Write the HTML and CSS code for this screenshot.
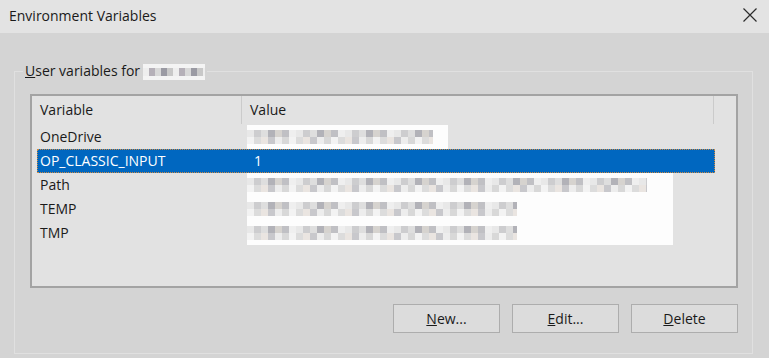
FILE: index.html
```html
<!DOCTYPE html>
<html>
<head>
  <meta charset="utf-8">
  <title>Environment Variables</title>
  <link rel="stylesheet" href="styles.css">
</head>
<body>
  <div class="titlebar">
    <span class="title">Environment Variables</span>
    <svg class="close" width="14" height="14" viewBox="0 0 14 14">
      <path d="M0.5 0.5 L13.5 13.5 M13.5 0.5 L0.5 13.5" stroke="#2b2b2b" stroke-width="1.2" fill="none"/>
    </svg>
  </div>

  <div class="content">
    <fieldset class="group">
      <legend><u>U</u>ser variables for<span class="blur blur-name"></span></legend>

      <div class="listview">
        <div class="list-header">
          <div class="col col-var">Variable</div>
          <div class="col col-val">Value</div>
          <div class="col col-rest"></div>
        </div>
        <div class="row">
          <div class="cell-var">OneDrive</div>
          <div class="cell-val white w-short"><span class="blur" style="width: 186px;"></span></div>
        </div>
        <div class="row selected">
          <div class="cell-var">OP_CLASSIC_INPUT</div>
          <div class="cell-val">1</div>
        </div>
        <div class="row">
          <div class="cell-var">Path</div>
          <div class="cell-val white w-long"><span class="blur" style="width: 400px;"></span></div>
        </div>
        <div class="row">
          <div class="cell-var">TEMP</div>
          <div class="cell-val white w-long"><span class="blur" style="width: 270px;"></span></div>
        </div>
        <div class="row">
          <div class="cell-var">TMP</div>
          <div class="cell-val white w-long"><span class="blur" style="width: 270px;"></span></div>
        </div>
      </div>

      <div class="buttons">
        <button><u>N</u>ew...</button>
        <button><u>E</u>dit...</button>
        <button><u>D</u>elete</button>
      </div>
    </fieldset>
  </div>
</body>
</html>
```

FILE: styles.css
```css
html, body {
  margin: 0;
  padding: 0;
}

body {
  width: 769px;
  height: 358px;
  overflow: hidden;
  background-color: #d4d4d4;
  font-family: "Open Sans", "Noto Sans", sans-serif;
  font-size: 14px;
  color: #1a1a1a;
}

.titlebar {
  height: 33px;
  background-color: #e3e3e3;
  display: flex;
  justify-content: space-between;
  align-items: center;
  padding: 0 12px 0 9px;
}

.title {
  font-size: 14px;
  margin-top: -2px;
}

.close {
  margin-top: -4px;
}

.content {
  padding: 28px 0 0 14px;
}

.group {
  width: 739px;
  height: 293px;
  box-sizing: border-box;
  margin: 0;
  padding: 0 14px 0 15px;
  border: 1px solid #e0e0e0;
}

.group legend {
  padding: 0 2px;
  margin-left: -7px;
  line-height: 20px;
}

.blur {
  display: inline-block;
  height: 16px;
  vertical-align: middle;
  background:
    repeating-linear-gradient(90deg, #e8e8e8 0 7px, #cdcdcf 7px 14px, #dedede 14px 21px, #b2b2b8 21px 28px, #d6d3cf 28px 35px, #c0c0c4 35px 42px, #efefef 42px 49px) 0 1px / 100% 7px no-repeat,
    repeating-linear-gradient(90deg, #f3f3f3 0 7px, #dcdcdc 7px 14px, #eae5e1 14px 21px, #c8c8cc 21px 28px, #ededed 28px 35px, #d8d8d8 35px 42px) 0 8px / 100% 7px no-repeat;
}

.blur-name {
  width: 62px;
  height: 16px;
  margin-left: 3px;
  background:
    repeating-linear-gradient(90deg, #eeeeee 0 6px, #b5b0b8 6px 12px, #d8d8d8 12px 18px, #9a9aa3 18px 24px, #c8c8c8 24px 30px) 0 4px / 100% 8px no-repeat,
    #f4f4f4;
}

.listview {
  height: 194px;
  box-sizing: border-box;
  margin-top: 13px;
  border: 2px solid #a3a3a3;
  background-color: #e2e2e2;
}

.list-header {
  display: flex;
  height: 29px;
}

.col {
  padding: 4px 0 0 8px;
  box-sizing: border-box;
  border-right: 1px solid #cbcbcb;
  margin-bottom: 1px;
}

.col-var {
  width: 210px;
}

.col-val {
  width: 472px;
}

.col-rest {
  border-right: none;
}

.row {
  display: flex;
  height: 24px;
  line-height: 24px;
  margin-left: 5px;
  width: 678px;
  box-sizing: border-box;
}

.cell-var {
  width: 206px;
  padding-left: 3px;
}

.cell-val {
  padding-left: 8px;
}

.white {
  background-color: #fdfdfd;
  padding-left: 0;
  margin-left: 1px;
  display: flex;
  align-items: center;
}

.w-short {
  width: 201px;
}

.w-long {
  width: 426px;
}

.selected {
  background-color: #0067c0;
  color: #ffffff;
  outline: 1px dotted #d08a40;
  outline-offset: -1px;
}

.buttons {
  display: flex;
  justify-content: flex-end;
  gap: 12px;
  margin-top: 16px;
}

.buttons button {
  width: 107px;
  height: 29px;
  box-sizing: border-box;
  border: 1px solid #adadad;
  background-color: #dcdcdc;
  font-family: inherit;
  font-size: 14px;
  color: #1a1a1a;
  padding: 0;
}
```
